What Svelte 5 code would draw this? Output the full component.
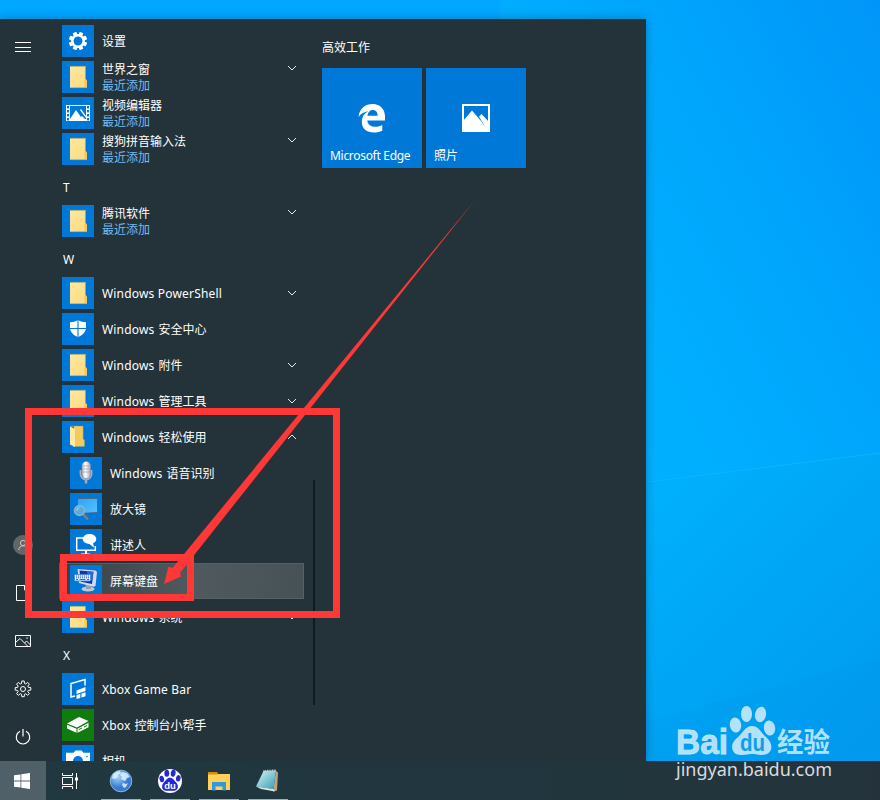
<script lang="ts">
	interface App {
		name?: string;
		latin?: string;
		letter?: string;
		icon?: string;
		recent?: boolean;
		chevron?: 'down' | 'up';
		child?: boolean;
		active?: boolean;
	}

	const apps: App[] = [
		{ name: '设置', icon: 'settings' },
		{ name: '世界之窗', icon: 'folder', recent: true, chevron: 'down' },
		{ name: '视频编辑器', icon: 'video', recent: true },
		{ name: '搜狗拼音输入法', icon: 'folder', recent: true, chevron: 'down' },
		{ letter: 'T' },
		{ name: '腾讯软件', icon: 'folder', recent: true, chevron: 'down' },
		{ letter: 'W' },
		{ latin: 'Windows PowerShell', icon: 'folder', chevron: 'down' },
		{ latin: 'Windows', name: '安全中心', icon: 'shield' },
		{ latin: 'Windows', name: '附件', icon: 'folder', chevron: 'down' },
		{ latin: 'Windows', name: '管理工具', icon: 'folder', chevron: 'down' },
		{ latin: 'Windows', name: '轻松使用', icon: 'folder-open', chevron: 'up' },
		{ latin: 'Windows', name: '语音识别', icon: 'mic', child: true },
		{ name: '放大镜', icon: 'magnifier', child: true },
		{ name: '讲述人', icon: 'narrator', child: true },
		{ name: '屏幕键盘', icon: 'keyboard', child: true, active: true },
		{ latin: 'Windows', name: '系统', icon: 'folder', chevron: 'down' },
		{ letter: 'X' },
		{ latin: 'Xbox Game Bar', icon: 'gamebar' },
		{ latin: 'Xbox', name: '控制台小帮手', icon: 'xbox' },
		{ name: '相机', icon: 'camera' },
	];

	const teeth = [0, 45, 90, 135, 180, 225, 270, 315];
	const running = ['globe', 'baidu', 'explorer', 'notebook'];
</script>

{#snippet appIcon(icon: string)}
	<svg class="icon" class:green={icon === 'xbox'} viewBox="0 0 32 32">
		{#if icon === 'settings'}
			<g fill="#fff">
				{#each teeth as a}
					<rect x="14" y="6.8" width="4" height="4.4" rx=".6" transform="rotate({a + 22.5} 16 16)" />
				{/each}
			</g>
			<circle cx="16" cy="16" r="5.7" fill="none" stroke="#fff" stroke-width="2.5" />
		{:else if icon === 'folder'}
			<path d="M8 5h15.5v13l1.5 1.5V27H8z" fill="url(#fold)" />
			<path d="M8 5.4h15.5v13" fill="none" stroke="#8fa884" stroke-width=".8" />
			<path d="M23.5 18.2 25 19.5V26.6H22.5V19z" fill="#fdc64e" />
			<path d="M8 26.6h17" stroke="#a8a87a" stroke-width=".8" />
		{:else if icon === 'folder-open'}
			<path d="M12 5h9v13l1.500 1v6.500H12z" fill="#f6ca5a" />
			<path d="M8 5.500l5 2.500v17.500l-1.500.5-.3-1L8 23.500z" fill="#ffe9a3" />
			<path d="M8 5.300h13v13" fill="none" stroke="#b7b883" stroke-width=".6" />
		{:else if icon === 'video'}
			<rect x="4" y="8" width="24" height="16" fill="#fff" />
			<rect x="8" y="9" width="16" height="13" fill="#0078d8" />
			<path d="M8 22l6-9 5 7 1-1 4 4H8zM18 13l1-1 5 7v2z" fill="#fff" />
			{#each [9, 13, 17, 21] as y}
				<rect x="5" {y} width="2" height="2.400" fill="#0078d8" />
				<rect x="25" {y} width="2" height="2.400" fill="#0078d8" />
			{/each}
		{:else if icon === 'shield'}
			<path d="M16 7c2.500 1.800 5 2.200 8 2.200V15c0 4-3.500 7-8 9.200C11.500 22 8 19 8 15V9.200c3 0 5.500-.4 8-2.200z" fill="#fff" />
			<path d="M16 7v17M8 15.500h16" stroke="#0078d8" stroke-width="1.100" />
		{:else if icon === 'mic'}
			<path d="M10.500 13v4a5.500 5.500 0 0 0 11 0v-4" fill="none" stroke="#a7b0c2" stroke-width="1.800" />
			<path d="M16 22v4.500" stroke="#a9a9b5" stroke-width="2.500" />
			<rect x="12" y="4.500" width="8.500" height="17" rx="4.200" fill="url(#silver)" stroke="#8191ae" stroke-width=".5" />
			<path d="M12 9h8.500M12 12h8.500M12 15h8.500" stroke="#a49fa7" stroke-width=".7" />
		{:else if icon === 'magnifier'}
			<path d="M7.500 5.500h20v14l-20 1z" fill="url(#screen)" stroke="#555f6c" stroke-width=".8" />
			<path d="M13 21l5 5.500" stroke="#7d8287" stroke-width="2.400" />
			<circle cx="9.500" cy="17.500" r="5" fill="#5ba9df" stroke="#91b2c5" stroke-width="1.400" />
			<path d="M7 18a3 3 0 0 1 2.500-3.500" fill="none" stroke="#9bdcfa" stroke-width="1" />
		{:else if icon === 'narrator'}
			<path d="M13 9H6.700v12.300h18.600V17" fill="none" stroke="#fff" stroke-width="1.500" />
			<path d="M16 21v4M11 25.500h9" stroke="#fff" stroke-width="2" />
			<ellipse cx="19.500" cy="10" rx="6.800" ry="5" fill="#fff" />
			<path d="M18 14h5l1 4.500z" fill="#fff" />
		{:else if icon === 'keyboard'}
			<ellipse cx="18" cy="24" rx="6.500" ry="2.600" fill="#c4c9d5" />
			<path d="M15.500 19h6l-.5 5h-5z" fill="#989fb0" />
			<path d="M7.500 4 25.500 5.500 27 7l-1.500 14-2 .8L9 18z" fill="#d7dae6" />
			<path d="M9.500 5.500l14 1.300-1.500 12.200-11-2.300z" fill="#1530b5" />
			<path d="M17 6.300l6.300.6-1 8.500-4-.7z" fill="#2a6ae0" />
			<rect x="4.500" y="9.500" width="16" height="6.500" rx=".8" fill="#e9f3ff" stroke="#3f83d8" stroke-width=".8" />
			<path d="M6 11h13M6 12.800h13" stroke="#176bc2" stroke-width="1" stroke-dasharray="1.200 .8" />
			<path d="M6 14.600h2m1.500 0h6m1.500 0h2" stroke="#176bc2" stroke-width="1" />
		{:else if icon === 'gamebar'}
			<path d="M9 20.500V10.500L23 6.500v6M9 20.500v3.500l4-1" fill="none" stroke="#fff" stroke-width="1.500" />
			<path d="M14.500 17.500l9-3.500v4l-9 3z M14.500 22l3.800-1v4l-3.800 1z M19.500 20.500l4-1.300v4l-4 1.300z" fill="#fff" />
		{:else if icon === 'xbox'}
			<path d="M5 14.500 17 8l9.500 4L15 18.500zM5 15.800l9.500 4v4L5 19.500zM15.500 19.800l11-6v4.500l-11 5.500z" fill="#fff" />
			<path d="M17 20.500l3-1.500M22 18l3-1.500" stroke="#107c10" stroke-width="1" />
		{:else if icon === 'camera'}
			<path d="M4 7.700h7.500L13.500 5.500h6l2 2.200H28V25H4z" fill="#fff" />
			<circle cx="16" cy="16" r="5" fill="#0078d8" />
			<circle cx="25" cy="11.500" r=".8" fill="#0078d8" />
		{/if}
	</svg>
{/snippet}

<div class="desktop">
	<svg class="wallpaper" viewBox="0 0 880 800" preserveAspectRatio="none">
		<defs>
			<linearGradient id="side" gradientUnits="userSpaceOnUse" x1="646" y1="450" x2="1012" y2="251">
				<stop offset="0" stop-color="#00b1ff" />
				<stop offset=".5" stop-color="#00a6fc" />
				<stop offset="1" stop-color="#0096f9" />
			</linearGradient>
			<linearGradient id="lower" gradientUnits="userSpaceOnUse" x1="650" y1="500" x2="880" y2="740">
				<stop offset="0" stop-color="#00b0fc" />
				<stop offset="1" stop-color="#009aef" />
			</linearGradient>
			<linearGradient id="fold" x1="0" y1="0" x2="1" y2="1">
				<stop offset="0" stop-color="#ffe8a0" />
				<stop offset="1" stop-color="#fbda7e" />
			</linearGradient>
			<linearGradient id="silver">
				<stop offset="0" stop-color="#b5b7c3" />
				<stop offset=".4" stop-color="#ffffff" />
				<stop offset="1" stop-color="#a9a8b5" />
			</linearGradient>
			<linearGradient id="screen" x1="0" y1="0" x2="1" y2="1">
				<stop offset="0" stop-color="#2da3f2" />
				<stop offset="1" stop-color="#55c3ff" />
			</linearGradient>
			<radialGradient id="world" cx=".35" cy=".3">
				<stop offset="0" stop-color="#a9d7fc" />
				<stop offset="1" stop-color="#3a7bcf" />
			</radialGradient>
			<linearGradient id="page" x1="0" y1="0" x2="1" y2="1">
				<stop offset="0" stop-color="#d9f4f5" />
				<stop offset="1" stop-color="#349eb5" />
			</linearGradient>
		</defs>
		<rect x="500" width="380" height="800" fill="url(#side)" />
		<path d="M640 483 880 453V800H640z" fill="url(#lower)" />
		<path d="M640 483 880 453" stroke="#18b4ff" stroke-width="1" opacity=".8" />
		<path d="M640 723 880 658V800H640z" fill="#0093e6" opacity=".15" />
	</svg>

	<div class="start-menu">
		<nav class="rail">
			<div class="rail-item">
				<svg width="16" height="16" viewBox="0 0 16 16"><path d="M0 3.500h16M0 8.500h16M0 12.500h16" stroke="#fff" stroke-width="1" /></svg>
			</div>
			<div class="rail-space"></div>
			<div class="rail-item">
				<svg width="20" height="20" viewBox="0 0 20 20">
					<circle cx="10" cy="10" r="10" fill="#646666" />
					<circle cx="10" cy="8" r="2.600" fill="none" stroke="#c5c7c7" />
					<path d="M5.800 15a4.200 4.200 0 0 1 8.400 0" fill="none" stroke="#c5c7c7" />
				</svg>
			</div>
			<div class="rail-item">
				<svg width="16" height="16" viewBox="0 0 16 16"><path d="M1.500.5h8l4.500 4.500v10.500H1.500zM9.500.5V5H14" fill="none" stroke="#fff" /></svg>
			</div>
			<div class="rail-item">
				<svg width="16" height="16" viewBox="0 0 16 16">
					<path d="M.5 2.500h15v11H.5zM.5 9.500l4.500-4 8 8M9.500 10l2-2 4 4" fill="none" stroke="#fff" />
					<rect x="11.500" y="4.500" width="1.200" height="1.200" fill="#fff" />
				</svg>
			</div>
			<div class="rail-item">
				<svg width="18" height="18" viewBox="0 0 18 18">
					<path d="M7.500 3.500 7.800 1h2.400l.3 2.500 1.200.5 2-1.600 1.700 1.700-1.600 2 .6 1.200 2.400.3v2.500l-2.500.3-.5 1.200 1.600 2-1.700 1.700-2-1.600-1.200.6-.3 2.400H7.800l-.3-2.500-1.200-.5-2 1.600-1.700-1.700 1.600-2-.6-1.200-2.400-.3V7.600l2.500-.3.5-1.200-1.600-2L4.300 2.400l2 1.600z" fill="none" stroke="#fff" />
					<circle cx="9" cy="9" r="2.500" fill="none" stroke="#fff" />
				</svg>
			</div>
			<div class="rail-item">
				<svg width="16" height="16" viewBox="0 0 16 16"><path d="M8 0v7.500M5 2.300a6.700 6.700 0 1 0 6 0" fill="none" stroke="#fff" stroke-width="1.200" /></svg>
			</div>
		</nav>

		<div class="apps">
			{#each apps as app}
				{#if app.letter}
					<div class="letter">{app.letter}</div>
				{:else}
					<div class="row" class:child={app.child} class:active={app.active}>
						{@render appIcon(app.icon ?? '')}
						<div class="label">
							<div class="name">
								{#if app.latin}<span class="latin">{app.latin}</span>{/if}
								{#if app.name}<span>{app.name}</span>{/if}
							</div>
							{#if app.recent}<div class="recent">最近添加</div>{/if}
						</div>
						{#if app.chevron}
							<svg class="chevron" class:up={app.chevron === 'up'} class:raised={app.recent} viewBox="0 0 8 6">
								<path d="M0 1l4 4 4-4" fill="none" stroke="#e6e9ea" />
							</svg>
						{/if}
					</div>
				{/if}
			{/each}
			<div class="scrollbar"></div>
		</div>

		<section class="tiles">
			<h2>高效工作</h2>
			<div class="tile-grid">
				<div class="tile">
					<svg width="28" height="30" viewBox="0 0 28 30">
						<path d="M.5 14C1.500 5 7.500 1 14.500 1 22.500 1 27 6.500 27 13.500V17.500H9.300c.3 4.300 4 6.300 8.300 6.300 2.500 0 4.700-.7 6.700-1.800v5.700C22 28.900 19 29.500 16 29.500 8.500 29.500 3.800 25.500 3.800 18.700c0-4.700 2.200-8.200 6.400-10.500C6.300 8.700 2.700 10.700.5 14zM9.400 12.700h10.200c0-3.500-1.800-5.600-4.800-5.600s-4.900 2.500-5.400 5.600z" fill="#fff" />
					</svg>
					<span class="edge">Microsoft Edge</span>
				</div>
				<div class="tile">
					<svg width="28" height="30" viewBox="0 0 28 30">
						<path d="M1 2h26v26H1z" fill="none" stroke="#fff" stroke-width="2" />
						<path d="M1 18 10 7.500l9 10.500 4.500 6.500L17 13.500l2.500-2.500L27 19v9H1z" fill="#fff" />
					</svg>
					<span>照片</span>
				</div>
			</div>
		</section>
	</div>

	<footer class="taskbar">
		<div class="start">
			<svg width="16" height="16" viewBox="0 0 16 16"><path d="M0 2.300 6.500 1.400v6.100H0zM7.300 1.200 16 0v7.500H7.300zM0 8.400h6.500v6.200L0 13.700zM7.300 8.400H16V16l-8.700-1.200z" fill="#fff" /></svg>
		</div>
		<div class="task-view">
			<svg width="16" height="16" viewBox="0 0 16 16">
				<path d="M.5 0v2.500h10V0M.5 16v-2.500h10V16M.5 4.500h10v7H.5zM14.500 0v16" fill="none" stroke="#fff" />
				<rect x="13" y="4.500" width="3" height="3" fill="#fff" />
			</svg>
		</div>
		{#each running as item}
			<div class="task">
				<svg width="24" height="24" viewBox="0 0 24 24">
					{#if item === 'globe'}
						<circle cx="12" cy="12" r="10.800" fill="url(#world)" stroke="#9bc6f0" stroke-width=".8" />
						<path d="M4 5.500 7 3l4-1 1 2-3 2-1 3-3 1-2-1zM13 3l5 1 3 4-3 1-2 3-4-2 1-2-2-2zM14 14l3 1 2-1-2 4-2 1-2-3z" fill="#e1f2ff" opacity=".85" />
					{:else if item === 'baidu'}
						<circle cx="12" cy="12" r="12" fill="#fff" />
						<g fill="#2626d9">
							<ellipse cx="3.800" cy="10" rx="2.300" ry="3.200" transform="rotate(-12 3.800 10)" />
							<ellipse cx="8.800" cy="4.200" rx="2.400" ry="3.500" />
							<ellipse cx="15.200" cy="4.200" rx="2.400" ry="3.500" transform="rotate(10 15.200 4.200)" />
							<ellipse cx="20.300" cy="9.300" rx="2.300" ry="3.200" transform="rotate(12 20.300 9.300)" />
							<path d="M12 8.800c3 0 4 2.500 6 4.500 3 2.800 2.500 8.500-2 8.500H8c-4.500 0-5-5.700-2-8.500 2-2 3-4.500 6-4.500z" />
						</g>
						<text x="12" y="20" class="du-small" text-anchor="middle">du</text>
					{:else if item === 'explorer'}
						<path d="M1 3h8l2 2h12v16H1z" fill="#ffd257" />
						<path d="M1 3h9l1.500 2.500H1z" fill="#d98f05" />
						<path d="M5 13h14v8.500h-3.500v-4h-7v4H5z" fill="#3296e0" />
					{:else}
						<path d="M20 2l2 1.500-1 18-4 1z" fill="#bda47f" />
						<path d="M7.500 2 20 1.500 17.500 20 0 17.500z" fill="url(#page)" />
						<path d="M0 17.500l17.500 2.500 1.500 2.500-14-2.500z" fill="#d9e5e4" />
						<path d="M7.500 2 20 1.500" stroke="#cad0cb" stroke-width="2" stroke-dasharray="1 .7" />
					{/if}
				</svg>
			</div>
		{/each}
	</footer>

	<svg class="overlay" viewBox="0 0 880 800">
		<g class="watermark">
			<text x="676" y="754" class="brand" textLength="52" lengthAdjust="spacingAndGlyphs">Bai</text>
			<ellipse cx="735.500" cy="725" rx="5.700" ry="7.500" transform="rotate(-10 735.500 725)" />
			<ellipse cx="746.500" cy="714" rx="5.500" ry="8" />
			<ellipse cx="760.500" cy="714.500" rx="5.500" ry="7.800" transform="rotate(12 760.500 714.500)" />
			<ellipse cx="769.500" cy="728" rx="5.700" ry="7.500" transform="rotate(-10 769.500 728)" />
			<path d="M752 726c7 0 9 7 14 11 9 8 6 18-4 18-5 0-6-1-10-1s-6 1-11 1c-10 0-12-11-4-17 6-5 8-12 15-12z" />
			<text x="740" y="751" class="du" textLength="25" lengthAdjust="spacingAndGlyphs">du</text>
			<text x="777" y="752" class="brand-cn" textLength="53" lengthAdjust="spacingAndGlyphs">经验</text>
			<text x="676" y="776" class="url" textLength="156" lengthAdjust="spacingAndGlyphs">jingyan.baidu.com</text>
		</g>
		<g fill="none" stroke="#fd3836" stroke-width="7">
			<rect x="28.500" y="411.500" width="308" height="203" />
			<rect x="63.500" y="557.500" width="127" height="40" />
		</g>
		<path d="M475 200 172.500 568 168.500 566.500 164 584 181 576.500 180 573z" fill="#fd3836" />
	</svg>
</div>

<style>
	:global(body) {
		margin: 0;
		overflow: hidden;
	}

	.desktop {
		position: relative;
		display: flex;
		flex-direction: column;
		width: 880px;
		height: 800px;
		padding-top: 19px;
		box-sizing: border-box;
		overflow: hidden;
		background: #00a8ff;
		color: #fff;
		font-family: 'Noto Sans', 'Noto Sans CJK SC', sans-serif;
		font-size: 12px;
	}

	.wallpaper,
	.overlay {
		position: absolute;
		inset: 0;
		width: 880px;
		height: 800px;
	}

	.overlay {
		pointer-events: none;
	}

	.start-menu {
		position: relative;
		display: flex;
		width: 646px;
		height: 742px;
		background: #24333a;
		box-shadow: 0 0 9px rgba(0, 50, 80, 0.4);
	}

	.rail {
		display: flex;
		flex-direction: column;
		width: 46px;
		padding-top: 4px;
		box-sizing: border-box;
	}

	.rail-item {
		display: flex;
		align-items: center;
		justify-content: center;
		height: 48px;
	}

	.rail-space {
		flex: 1;
	}

	.apps {
		position: relative;
		width: 276px;
		padding: 4px 18px 0 13px;
		box-sizing: border-box;
		overflow: hidden;
	}

	.letter {
		height: 36px;
		padding-left: 4px;
		font-family: 'Noto Sans', sans-serif;
		line-height: 42px;
	}

	.row {
		display: flex;
		align-items: center;
		gap: 8px;
		height: 36px;
		padding: 0 8px 0 3px;
		box-sizing: border-box;
	}

	.row.child {
		padding-left: 11px;
	}

	.row.active {
		background: linear-gradient(100deg, #344148, #505a5e 55%, #465156);
		box-shadow: inset 0 0 0 1px #566166;
	}

	.icon {
		flex: none;
		width: 32px;
		height: 32px;
		background: #0078d8;
	}

	.icon.green {
		background: #107c10;
	}

	.label {
		flex: 1;
		padding-top: 2px;
		line-height: 16px;
		white-space: nowrap;
	}

	.name {
		display: flex;
		gap: 4px;
	}

	.latin {
		letter-spacing: 0.18px;
	}

	.recent {
		color: #76b9ed;
	}

	.chevron {
		width: 8px;
		height: 6px;
		overflow: visible;
	}

	.chevron.up {
		transform: rotate(180deg);
	}

	.chevron.raised {
		margin-bottom: 18px;
	}

	.scrollbar {
		position: absolute;
		top: 461px;
		right: 7px;
		width: 2px;
		height: 225px;
		background: #10191c;
	}

	.tiles {
		padding-top: 21px;
	}

	h2 {
		margin: 0 0 12px;
		font-size: 12px;
		font-weight: 400;
		line-height: 16px;
	}

	.tile-grid {
		display: flex;
		gap: 4px;
	}

	.tile {
		display: flex;
		flex-direction: column;
		align-items: center;
		justify-content: flex-end;
		width: 100px;
		height: 100px;
		padding: 0 8px 4px;
		box-sizing: border-box;
		background: #0078d8;
	}

	.tile svg {
		margin-bottom: 15px;
	}

	.tile span {
		align-self: flex-start;
		line-height: 16px;
		white-space: nowrap;
	}

	.tile .edge {
		letter-spacing: -0.3px;
	}

	.taskbar {
		position: relative;
		display: flex;
		flex: 1;
		gap: 9px;
		background: linear-gradient(90deg, #213840, #21363e 60%, #24333b);
	}

	.start,
	.task-view,
	.task {
		display: flex;
		align-items: center;
		justify-content: center;
	}

	.start {
		width: 46px;
		padding: 1px 2px 0 0;
		box-sizing: border-box;
		background: #4f6068;
	}

	.task-view {
		width: 30px;
		margin-right: 7px;
	}

	.task {
		width: 40px;
		padding-top: 2px;
		border-bottom: 1px solid #76b9ed;
		box-sizing: border-box;
	}

	.watermark {
		fill: rgba(218, 240, 251, 0.82);
	}

	.brand {
		font: 700 35px 'Liberation Sans', sans-serif;
		stroke: #c2e8fa;
		stroke-width: 0.8px;
	}

	.du {
		fill: #0ba0ea;
		font: 700 24px 'Liberation Sans', sans-serif;
	}

	.brand-cn {
		font: 700 27px 'Noto Sans CJK SC', sans-serif;
	}

	.url {
		fill: #d8dcde;
		font: 18px 'Noto Sans', sans-serif;
	}

	.du-small {
		fill: #fff;
		font: 700 9.500px 'Liberation Sans', sans-serif;
	}
</style>
